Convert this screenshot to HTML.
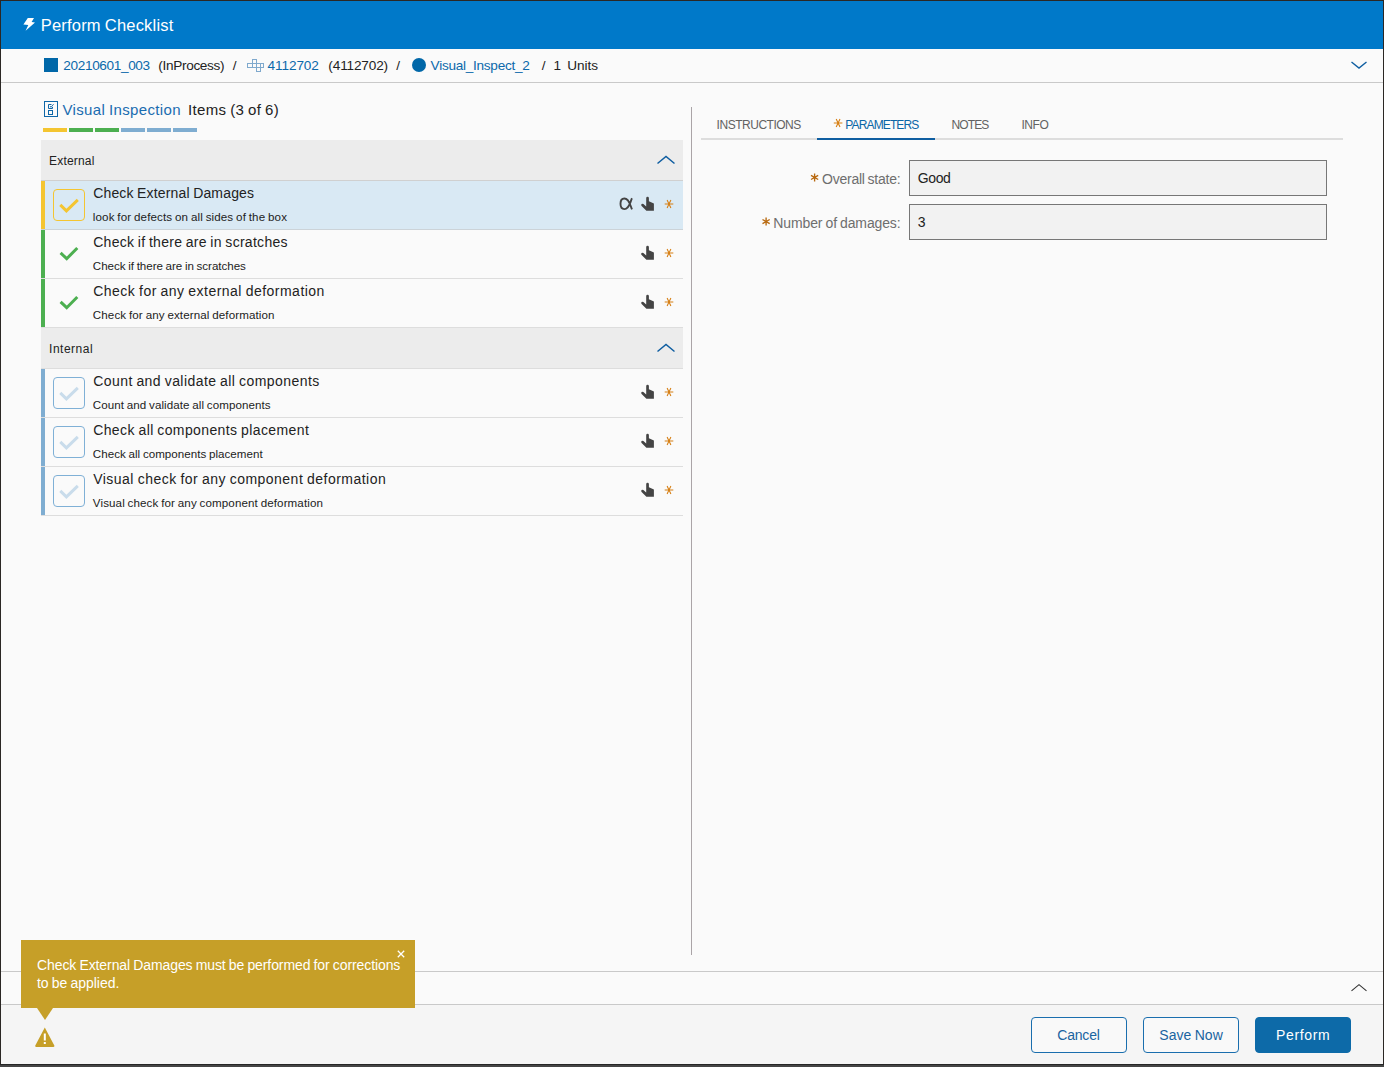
<!DOCTYPE html>
<html><head><meta charset="utf-8"><title>Perform Checklist</title>
<style>
html,body{margin:0;padding:0}
body{width:1384px;height:1067px;overflow:hidden;position:relative;background:#fafafa;font-family:"Liberation Sans",sans-serif}
.a{position:absolute}
.t{position:absolute;white-space:pre;word-spacing:-0.045em;line-height:20px;height:20px}
.hdr{left:1px;top:1px;width:1382px;height:48px;background:#0079c9}
.row{left:41px;width:642px;height:48px;border-top:1px solid #ddd}
.bar{left:41px;width:4px;height:49px}
.cb{left:53px;width:30px;height:30px;border:1px solid #7fb0d6;border-radius:4px}
.btn{top:1017px;width:94px;height:34px;border:1px solid #1a6eae;border-radius:4px;background:#f9f9f9}
.inp{left:909px;width:416px;height:34px;border:1px solid #777;background:#f2f2f2}
</style></head><body>
<!-- window frame -->
<div class="a hdr"></div>
<!-- breadcrumb -->
<div class="a" style="left:1px;top:82px;width:1382px;height:1px;background:#c9c9c9"></div>
<div class="a" style="left:44px;top:58px;width:14px;height:14px;background:#0067a8"></div>
<div class="a" style="left:412px;top:58px;width:14px;height:14px;border-radius:50%;background:#0067a8"></div>
<!-- progress -->
<div class="a" style="left:43px;top:128px;width:24px;height:4px;background:#f4c531"></div>
<div class="a" style="left:69px;top:128px;width:24px;height:4px;background:#4caf50"></div>
<div class="a" style="left:95px;top:128px;width:24px;height:4px;background:#4caf50"></div>
<div class="a" style="left:121px;top:128px;width:24px;height:4px;background:#7fadd1"></div>
<div class="a" style="left:147px;top:128px;width:24px;height:4px;background:#7fadd1"></div>
<div class="a" style="left:173px;top:128px;width:24px;height:4px;background:#7fadd1"></div>
<!-- group headers -->
<div class="a" style="left:41px;top:140px;width:642px;height:40px;background:#ececec"></div>
<div class="a" style="left:41px;top:328px;width:642px;height:40px;background:#ececec"></div>
<!-- rows -->
<div class="a row" style="top:180px;background:#d9e9f4;border-top-color:#d0d0d0"></div>
<div class="a row" style="top:229px;border-top-color:#ccd3d8"></div>
<div class="a row" style="top:278px"></div>
<div class="a" style="left:41px;top:327px;width:642px;height:1px;background:#ddd"></div>
<div class="a row" style="top:368px"></div>
<div class="a row" style="top:417px"></div>
<div class="a row" style="top:466px"></div>
<div class="a" style="left:41px;top:515px;width:642px;height:1px;background:#ddd"></div>
<div class="a bar" style="top:181px;height:48px;background:#f4c531"></div>
<div class="a bar" style="top:230px;height:48px;background:#4caf50"></div>
<div class="a bar" style="top:279px;height:48px;background:#4caf50"></div>
<div class="a bar" style="top:369px;height:48px;background:#7fadd1"></div>
<div class="a bar" style="top:418px;height:48px;background:#7fadd1"></div>
<div class="a bar" style="top:467px;height:48px;background:#7fadd1"></div>
<!-- checkboxes -->
<div class="a cb" style="top:189px;border-color:#f4c531"></div>
<div class="a cb" style="top:377px"></div>
<div class="a cb" style="top:426px"></div>
<div class="a cb" style="top:475px"></div>
<!-- divider -->
<div class="a" style="left:691px;top:107px;width:1px;height:848px;background:#aaa4a7"></div>
<!-- tabs -->
<div class="a" style="left:701px;top:138px;width:642px;height:2px;background:#ddd"></div>
<div class="a" style="left:817px;top:138px;width:118px;height:2px;background:#0f5ea1"></div>
<!-- inputs -->
<div class="a inp" style="top:160px"></div>
<div class="a inp" style="top:204px"></div>
<!-- footer -->
<div class="a" style="left:1px;top:971px;width:1382px;height:1px;background:#c9c9c9"></div>
<div class="a" style="left:1px;top:1004px;width:1382px;height:60px;background:#f5f5f5;border-top:1px solid #c9c9c9;box-sizing:border-box"></div>
<div class="a btn" style="left:1031px"></div>
<div class="a btn" style="left:1143px"></div>
<div class="a btn" style="left:1255px;background:#0d6aa8;border-color:#0d6aa8"></div>
<!-- toast -->
<div class="a" style="left:21px;top:940px;width:394px;height:68px;background:#c69f28"></div>
<div class="a" style="left:37px;top:1008px;width:0;height:0;border-left:8px solid transparent;border-right:8px solid transparent;border-top:12px solid #c69f28"></div>
<!-- icons -->
<svg class="a" style="left:0;top:0" width="1384" height="1067" viewBox="0 0 1384 1067">
<!-- lightning -->
<polygon points="27.8,18 34,18 31.6,22.1 35,22.4 25.6,30.8 28.3,24.9 23.4,24.5" fill="#fff"/>
<!-- bc chevron -->
<polyline points="1351.5,62 1359,68 1366.5,62" fill="none" stroke="#0f5ea1" stroke-width="1.4"/>
<!-- flow icon -->
<g fill="none" stroke="#7fa9cd" stroke-width="1">
<rect x="247.5" y="63.5" width="16" height="4"/>
<rect x="252.5" y="59.5" width="4" height="8"/>
<rect x="256.5" y="63.5" width="4" height="8"/>
</g>
<!-- checklist icon -->
<g fill="none" stroke="#0f67a8" stroke-width="1">
<rect x="44.5" y="101.5" width="13" height="15"/>
<rect x="48.5" y="110.5" width="4" height="4"/>
<polyline points="51.5,104.5 48.5,104.5 48.5,108.5 52.5,108.5 52.5,107"/>
<polyline points="50,106 51,107.3 53.6,104.2" stroke-width="0.9"/>
</g>
<!-- group chevrons -->
<polyline points="657.5,163.5 666,156.5 674.5,163.5" fill="none" stroke="#0f5ea1" stroke-width="1.5"/>
<polyline points="657.5,351.5 666,344.5 674.5,351.5" fill="none" stroke="#0f5ea1" stroke-width="1.5"/>
<!-- bottom chevron -->
<polyline points="1351.5,990.9 1359,984.7 1366.5,990.9" fill="none" stroke="#333" stroke-width="1.1"/>
<!-- checks -->
<polyline points="60.3,204.9 66.4,210.8 77.8,199.9" fill="none" stroke="#f4c531" stroke-width="3"/>
<polyline points="60.6,252.9 66.7,258.7 77.3,248.0" fill="none" stroke="#4caf50" stroke-width="3"/>
<polyline points="60.6,301.9 66.7,307.7 77.3,297.0" fill="none" stroke="#4caf50" stroke-width="3"/>
<polyline points="60.3,392.9 66.4,398.8 77.8,387.9" fill="none" stroke="#c9dceb" stroke-width="3"/>
<polyline points="60.3,441.9 66.4,447.8 77.8,436.9" fill="none" stroke="#c9dceb" stroke-width="3"/>
<polyline points="60.3,490.9 66.4,496.8 77.8,485.9" fill="none" stroke="#c9dceb" stroke-width="3"/>
<!-- alpha -->
<path d="M632,198.3 C630.4,201 629.6,209.1 624.4,209.1 C621.7,209.1 620.5,206.6 620.5,203.8 C620.5,201 621.7,198.5 624.4,198.5 C629.6,198.5 630.4,206.6 632,209.4" fill="none" stroke="#444" stroke-width="1.9"/>
<!-- hands -->
<g fill="#444"><g transform="translate(0,0)"><path d="M646.2,198.2 a1.35,1.35 0 0 1 2.7,0 V201.2 L653.9,203.4 V210.8 H646.4 L641.6,205.9 a1.25,1.25 0 0 1 1.8,-1.8 L646.2,206.5 Z"/></g><g transform="translate(0,49)"><path d="M646.2,198.2 a1.35,1.35 0 0 1 2.7,0 V201.2 L653.9,203.4 V210.8 H646.4 L641.6,205.9 a1.25,1.25 0 0 1 1.8,-1.8 L646.2,206.5 Z"/></g><g transform="translate(0,98)"><path d="M646.2,198.2 a1.35,1.35 0 0 1 2.7,0 V201.2 L653.9,203.4 V210.8 H646.4 L641.6,205.9 a1.25,1.25 0 0 1 1.8,-1.8 L646.2,206.5 Z"/></g><g transform="translate(0,188)"><path d="M646.2,198.2 a1.35,1.35 0 0 1 2.7,0 V201.2 L653.9,203.4 V210.8 H646.4 L641.6,205.9 a1.25,1.25 0 0 1 1.8,-1.8 L646.2,206.5 Z"/></g><g transform="translate(0,237)"><path d="M646.2,198.2 a1.35,1.35 0 0 1 2.7,0 V201.2 L653.9,203.4 V210.8 H646.4 L641.6,205.9 a1.25,1.25 0 0 1 1.8,-1.8 L646.2,206.5 Z"/></g><g transform="translate(0,286)"><path d="M646.2,198.2 a1.35,1.35 0 0 1 2.7,0 V201.2 L653.9,203.4 V210.8 H646.4 L641.6,205.9 a1.25,1.25 0 0 1 1.8,-1.8 L646.2,206.5 Z"/></g></g>
<!-- asterisks -->
<g stroke="#d67e12" stroke-width="1.05" fill="none"><g transform="translate(0,0)"><path d="M664.7,204h8.6M667.1,200.1l3.8,7.8M670.9,200.1l-3.8,7.8"/></g><g transform="translate(0,49)"><path d="M664.7,204h8.6M667.1,200.1l3.8,7.8M670.9,200.1l-3.8,7.8"/></g><g transform="translate(0,98)"><path d="M664.7,204h8.6M667.1,200.1l3.8,7.8M670.9,200.1l-3.8,7.8"/></g><g transform="translate(0,188)"><path d="M664.7,204h8.6M667.1,200.1l3.8,7.8M670.9,200.1l-3.8,7.8"/></g><g transform="translate(0,237)"><path d="M664.7,204h8.6M667.1,200.1l3.8,7.8M670.9,200.1l-3.8,7.8"/></g><g transform="translate(0,286)"><path d="M664.7,204h8.6M667.1,200.1l3.8,7.8M670.9,200.1l-3.8,7.8"/></g></g>
<!-- tab asterisk -->
<path d="M833.8000000000001,123h8.6M836.2,119.1l3.8,7.8M840.0,119.1l-3.8,7.8" stroke="#d67e12" stroke-width="1.1" fill="none"/>
<!-- label asterisks -->
<g stroke="#b8690f" stroke-width="1.35" fill="none"><path d="M814.6,173.4v8M811.0,175.3l7.2,4.2M818.2,175.3l-7.2,4.2"/><path d="M766.1,217.6v8M762.5,219.5l7.2,4.2M769.7,219.5l-7.2,4.2"/></g>
<!-- toast close -->
<path d="M397.8,950.8l6.4,6.4M404.2,950.8l-6.4,6.4" stroke="#fff" stroke-width="1.3" fill="none"/>
<!-- warning -->
<path d="M44.8,1027.5 L54.3,1045.5 a1,1 0 0 1 -0.9,1.5 H36.2 a1,1 0 0 1 -0.9,-1.5 Z" fill="#c69f28"/>
<rect x="43.8" y="1033.5" width="2" height="7" fill="#fff"/><rect x="43.8" y="1042" width="2" height="2" fill="#fff"/>
</svg>
<span class="t" style="left:40.80px;top:15.00px;font-size:16.5px;letter-spacing:0.19px;color:#fff">Perform Checklist</span>
<span class="t" style="left:63.35px;top:56.00px;font-size:13.6px;letter-spacing:-0.36px;color:#0b69ab">20210601_003</span>
<span class="t" style="left:158.35px;top:56.00px;font-size:13.6px;letter-spacing:-0.33px;color:#222">(InProcess)</span>
<span class="t" style="left:232.80px;top:56.00px;font-size:13.6px;letter-spacing:0px;color:#222">/</span>
<span class="t" style="left:267.60px;top:56.00px;font-size:13.6px;letter-spacing:-0.11px;color:#0b69ab">4112702</span>
<span class="t" style="left:328.35px;top:56.00px;font-size:13.6px;letter-spacing:-0.15px;color:#222">(4112702)</span>
<span class="t" style="left:396.30px;top:56.00px;font-size:13.6px;letter-spacing:0px;color:#222">/</span>
<span class="t" style="left:430.60px;top:56.00px;font-size:13.6px;letter-spacing:-0.27px;color:#0b69ab">Visual_Inspect_2</span>
<span class="t" style="left:541.80px;top:56.00px;font-size:13.6px;letter-spacing:0px;color:#222">/</span>
<span class="t" style="left:553.60px;top:56.00px;font-size:13.6px;letter-spacing:0px;color:#222">1</span>
<span class="t" style="left:567.35px;top:56.00px;font-size:13.6px;letter-spacing:-0.06px;color:#222">Units</span>
<span class="t" style="left:62.50px;top:100.00px;font-size:15px;letter-spacing:0.35px;color:#1a6cb0">Visual Inspection</span>
<span class="t" style="left:188.00px;top:100.00px;font-size:15px;letter-spacing:0.34px;color:#222">Items (3 of 6)</span>
<span class="t" style="left:49.10px;top:151.00px;font-size:12px;letter-spacing:0.17px;color:#222">External</span>
<span class="t" style="left:49.10px;top:339.00px;font-size:12px;letter-spacing:0.5px;color:#222">Internal</span>
<span class="t" style="left:93.20px;top:183.00px;font-size:14px;letter-spacing:0.16px;color:#222">Check External Damages</span>
<span class="t" style="left:92.85px;top:207.00px;font-size:11.6px;letter-spacing:0.11px;color:#222">look for defects on all sides of the box</span>
<span class="t" style="left:93.20px;top:232.00px;font-size:14px;letter-spacing:0.28px;color:#222">Check if there are in scratches</span>
<span class="t" style="left:92.85px;top:256.00px;font-size:11.6px;letter-spacing:-0.03px;color:#222">Check if there are in scratches</span>
<span class="t" style="left:93.20px;top:281.00px;font-size:14px;letter-spacing:0.48px;color:#222">Check for any external deformation</span>
<span class="t" style="left:92.85px;top:305.00px;font-size:11.6px;letter-spacing:0.1px;color:#222">Check for any external deformation</span>
<span class="t" style="left:93.20px;top:371.00px;font-size:14px;letter-spacing:0.43px;color:#222">Count and validate all components</span>
<span class="t" style="left:92.85px;top:395.00px;font-size:11.6px;letter-spacing:0.06px;color:#222">Count and validate all components</span>
<span class="t" style="left:93.20px;top:420.00px;font-size:14px;letter-spacing:0.39px;color:#222">Check all components placement</span>
<span class="t" style="left:92.85px;top:444.00px;font-size:11.6px;letter-spacing:0.02px;color:#222">Check all components placement</span>
<span class="t" style="left:93.20px;top:469.00px;font-size:14px;letter-spacing:0.48px;color:#222">Visual check for any component deformation</span>
<span class="t" style="left:92.85px;top:493.00px;font-size:11.6px;letter-spacing:0.1px;color:#222">Visual check for any component deformation</span>
<span class="t" style="left:716.60px;top:115.00px;font-size:12px;letter-spacing:-0.48px;color:#626262">INSTRUCTIONS</span>
<span class="t" style="left:845.35px;top:115.00px;font-size:12px;letter-spacing:-0.87px;color:#0b66a6">PARAMETERS</span>
<span class="t" style="left:951.60px;top:115.00px;font-size:12px;letter-spacing:-0.9px;color:#626262">NOTES</span>
<span class="t" style="left:1021.40px;top:115.00px;font-size:12px;letter-spacing:-0.42px;color:#626262">INFO</span>
<span class="t" style="left:822.10px;top:169.00px;font-size:14px;letter-spacing:-0.26px;color:#6e6e6e">Overall state:</span>
<span class="t" style="left:773.35px;top:213.00px;font-size:14px;letter-spacing:-0.13px;color:#6e6e6e">Number of damages:</span>
<span class="t" style="left:917.85px;top:168.00px;font-size:14px;letter-spacing:-0.42px;color:#222">Good</span>
<span class="t" style="left:917.85px;top:212.00px;font-size:14px;letter-spacing:0px;color:#222">3</span>
<span class="t" style="left:37.00px;top:955.00px;font-size:14px;letter-spacing:-0.09px;color:#fff">Check External Damages must be performed for corrections</span>
<span class="t" style="left:37.00px;top:973.00px;font-size:14px;letter-spacing:-0.04px;color:#fff">to be applied.</span>
<span class="t" style="left:1057.35px;top:1025.00px;font-size:14px;letter-spacing:-0.22px;color:#1a64a0">Cancel</span>
<span class="t" style="left:1159.35px;top:1025.00px;font-size:14px;letter-spacing:0.04px;color:#1a64a0">Save Now</span>
<span class="t" style="left:1276.10px;top:1025.00px;font-size:14px;letter-spacing:0.62px;color:#fff">Perform</span>
<!-- window border on top -->
<div class="a" style="left:0;top:0;width:1384px;height:1px;background:#2b2724"></div>
<div class="a" style="left:0;top:0;width:1px;height:1067px;background:#2b2724"></div>
<div class="a" style="left:1383px;top:0;width:1px;height:1067px;background:#2b2724"></div>
<div class="a" style="left:0;top:1064px;width:1384px;height:3px;background:#454545"></div>
<div class="a" style="left:0;top:1064px;width:1384px;height:1px;background:#262626"></div>
</body></html>
